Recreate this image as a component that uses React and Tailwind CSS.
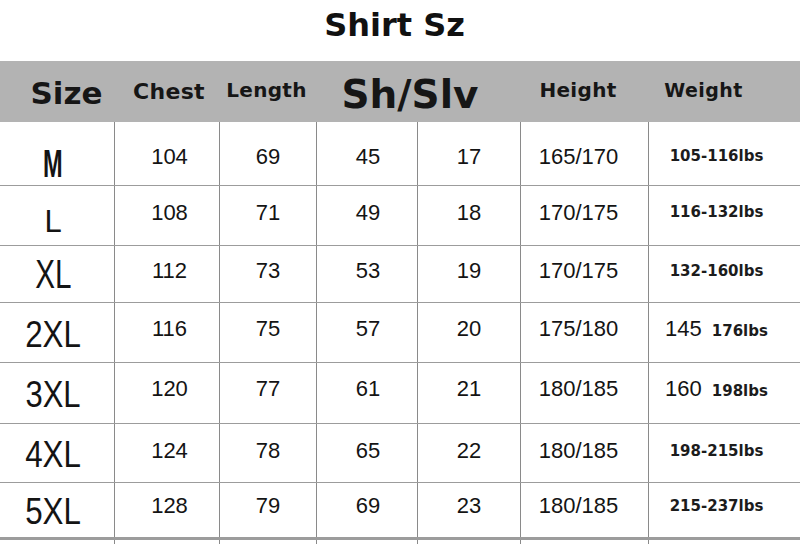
import React from "react";

const COLS = "grid grid-cols-[114px_105px_97px_101px_103px_128px_152px]";
const DJ = { fontFamily: '"DejaVu Sans", "Liberation Sans", sans-serif' };
const LS = { fontFamily: '"Liberation Sans", Arial, sans-serif' };

const rows = [
  { size: "M", rowH: "h-[64px]", sizeCls: "pt-[20px]", sizeTxt: "text-[38px] font-bold scale-x-[0.62]", num: "pt-[6px]", vals: ["104", "69", "45", "17", "165/170"], w: ["", "105-116lbs"] },
  { size: "L", rowH: "h-[60px]", sizeCls: "pt-[12px]", sizeTxt: "text-[31px] scale-x-[1]", num: "pb-[6px]", vals: ["108", "71", "49", "18", "170/175"], w: ["", "116-132lbs"] },
  { size: "XL", rowH: "h-[57px]", sizeCls: "pt-[0px]", sizeTxt: "text-[40px] scale-x-[0.74]", num: "pb-[6px]", vals: ["112", "73", "53", "19", "170/175"], w: ["", "132-160lbs"] },
  { size: "2XL", rowH: "h-[60px]", sizeCls: "pt-[4px]", sizeTxt: "text-[36px] scale-x-[0.87]", num: "pb-[8px]", vals: ["116", "75", "57", "20", "175/180"], w: ["145", "176lbs"] },
  { size: "3XL", rowH: "h-[61px]", sizeCls: "pt-[4px]", sizeTxt: "text-[36px] scale-x-[0.86]", num: "pb-[8px]", vals: ["120", "77", "61", "21", "180/185"], w: ["160", "198lbs"] },
  { size: "4XL", rowH: "h-[59px]", sizeCls: "pt-[4px]", sizeTxt: "text-[36px] scale-x-[0.87]", num: "pb-[4px]", vals: ["124", "78", "65", "22", "180/185"], w: ["", "198-215lbs"] },
  { size: "5XL", rowH: "h-[55px]", sizeCls: "pt-[4px]", sizeTxt: "text-[36px] scale-x-[0.87]", num: "pb-[8px]", vals: ["128", "79", "69", "23", "180/185"], w: ["", "215-237lbs"] },
];

const cellPad = ["pl-[5px]", "", "pl-[2px]", "", "pr-[12px]"];

function Header() {
  return (
    <div className="flex h-[61px] items-center bg-[#b3b3b3] text-[#161616] font-bold" style={DJ}>
      <div className="w-[133px] flex justify-center text-[31px] leading-none pt-[4px]">Size</div>
      <div className="w-[72px] flex justify-center text-[22px] leading-none tracking-[0.3px] pt-[1px] whitespace-nowrap">Chest</div>
      <div className="w-[123px] flex justify-center text-[20px] leading-none tracking-[0.3px] pb-[3px]">Length</div>
      <div className="w-[164px] flex justify-center text-[39px] leading-none pt-[5px] whitespace-nowrap">Sh/Slv</div>
      <div className="w-[172px] flex justify-center text-[20px] leading-none tracking-[0.3px] pb-[3px]">Height</div>
      <div className="w-[79px] flex justify-center text-[19px] leading-none tracking-[0.4px] pb-[2px]">Weight</div>
    </div>
  );
}

function Row({ r }) {
  return (
    <div className={`${COLS} ${r.rowH} border-b border-[#9c9c9c] text-[#141414]`}>
      <div className={`flex items-center justify-center pr-[8px] ${r.sizeCls}`} style={LS}>
        <span className={`inline-block leading-none ${r.sizeTxt}`}>{r.size}</span>
      </div>
      {r.vals.map((v, i) => (
        <div
          key={i}
          className={`flex items-center justify-center border-l border-[#8a8a8a] text-[22px] leading-none ${r.num} ${cellPad[i]}`}
          style={LS}
        >
          {v}
        </div>
      ))}
      <div className={`flex items-center justify-center border-l border-[#8a8a8a] pr-[16px] ${r.num}`}>
        {r.w[0] ? (
          <span className="flex items-baseline gap-[10px] leading-none">
            <span className="text-[22px]" style={LS}>{r.w[0]}</span>
            <span className="text-[15px] font-bold text-[#1c1c1c]" style={DJ}>{r.w[1]}</span>
          </span>
        ) : (
          <span className="text-[15px] font-bold leading-none text-[#1c1c1c]" style={DJ}>{r.w[1]}</span>
        )}
      </div>
    </div>
  );
}

export default function App() {
  return (
    <div className="w-[800px] h-[544px] overflow-hidden bg-white">
      <div className="h-[61px] flex items-center justify-center pr-[11px] pb-[11px]">
        <h1 className="text-[32px] font-bold leading-none text-[#111]" style={DJ}>Shirt Sz</h1>
      </div>
      <Header />
      {rows.map((r) => (
        <Row key={r.size} r={r} />
      ))}
      <div className="h-[2px] bg-[#9c9c9c]" />
      <div className={`${COLS} h-[10px]`}>
        <div />
        {[0, 1, 2, 3, 4, 5].map((i) => (
          <div key={i} className="border-l border-[#8a8a8a]" />
        ))}
      </div>
    </div>
  );
}
